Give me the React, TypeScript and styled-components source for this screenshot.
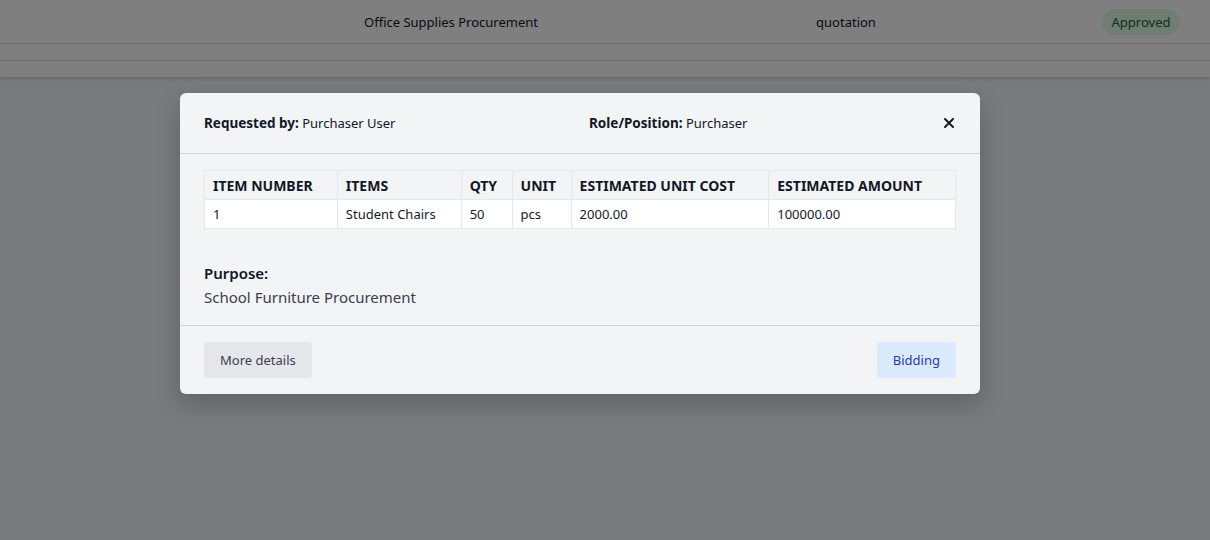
import React from 'react';
import styled, { createGlobalStyle } from 'styled-components';

const GlobalStyle = createGlobalStyle`
  html, body {
    margin: 0;
    padding: 0;
    background: #f3f4f6;
    font-family: 'Noto Sans', 'Open Sans', sans-serif;
    color: #111827;
  }
  * { box-sizing: border-box; }
`;

const Page = styled.div`
  width: 1210px;
  height: 540px;
  position: relative;
  overflow: hidden;
  background: #f3f4f6;
`;

const Card = styled.div`
  background: #ffffff;
  box-shadow: 0 1px 3px rgba(0, 0, 0, 0.12), 0 2px 6px rgba(0, 0, 0, 0.08);
  padding-bottom: 16px;
`;

const BgRow = styled.div<{ $empty?: boolean }>`
  display: grid;
  grid-template-columns: 250px 402px 388px 202px;
  align-items: center;
  height: ${(p) => (p.$empty ? '17px' : '44px')};
  border-bottom: 1px solid #d1d5db;
  font-size: 13px;
`;

const BgCell = styled.div`
  text-align: center;
  color: #111827;
`;

const Badge = styled.span`
  display: inline-block;
  padding: 4px 10px;
  border-radius: 999px;
  background: #dcfce7;
  color: #166534;
  font-size: 13px;
`;

const Overlay = styled.div`
  position: absolute;
  inset: 0;
  background: rgba(0, 0, 0, 0.5);
  padding: 93px 0 0 180px;
`;

const Modal = styled.div`
  width: 800px;
  background: #f3f4f6;
  border-radius: 6px;
  box-shadow: 0 10px 25px rgba(0, 0, 0, 0.2);
  overflow: hidden;
`;

const Header = styled.div`
  height: 61px;
  display: grid;
  grid-template-columns: 385px 1fr auto;
  align-items: center;
  padding: 0 24px 1px;
  border-bottom: 1px solid #d1d5db;
  font-size: 13px;
  color: #111827;
`;

const Label = styled.b`
  font-weight: 700;
  font-size: 13.5px;
`;

const Close = styled.button`
  border: none;
  background: none;
  padding: 0;
  margin-right: 1px;
  display: flex;
  cursor: pointer;
`;

const Body = styled.div`
  padding: 16px 24px 16px;
  border-bottom: 1px solid #d1d5db;
`;

const Table = styled.table`
  width: 100%;
  border-collapse: collapse;
`;

const Th = styled.th<{ $w: number }>`
  width: ${(p) => p.$w}px;
  text-align: left;
  font-size: 14px;
  font-weight: 700;
  padding: 0 8px;
  height: 29px;
  border: 1px solid #e5e7eb;
  background: #f3f4f6;
  color: #111827;
`;

const Td = styled.td`
  padding: 0 8px;
  height: 29px;
  font-size: 13px;
  border: 1px solid #e5e7eb;
  background: #ffffff;
  color: #111827;
`;

const Purpose = styled.div`
  margin-top: 32px;
  font-size: 15px;
  line-height: 24px;
`;

const PurposeLabel = styled.div`
  font-weight: 600;
  color: #111827;
`;

const PurposeText = styled.div`
  color: #374151;
`;

const Footer = styled.div`
  display: flex;
  justify-content: space-between;
  padding: 16px 24px;
`;

const Button = styled.button<{ $variant: 'gray' | 'blue' }>`
  height: 36px;
  padding: 0 16px;
  border: none;
  border-radius: 4px;
  font-family: inherit;
  font-size: 13px;
  cursor: pointer;
  background: ${(p) => (p.$variant === 'blue' ? '#dbeafe' : '#e5e7eb')};
  color: ${(p) => (p.$variant === 'blue' ? '#1e40af' : '#374151')};
`;

const columns = [
  { label: 'ITEM NUMBER', w: 133 },
  { label: 'ITEMS', w: 124 },
  { label: 'QTY', w: 51 },
  { label: 'UNIT', w: 59 },
  { label: 'ESTIMATED UNIT COST', w: 198 },
  { label: 'ESTIMATED AMOUNT', w: 187 },
];

const rows = [['1', 'Student Chairs', '50', 'pcs', '2000.00', '100000.00']];

const App: React.FC = () => {
  return (
    <Page>
      <GlobalStyle />
      <Card>
        <BgRow>
          <BgCell />
          <BgCell>Office Supplies Procurement</BgCell>
          <BgCell>quotation</BgCell>
          <BgCell>
            <Badge>Approved</Badge>
          </BgCell>
        </BgRow>
        <BgRow $empty />
      </Card>
      <Overlay>
        <Modal>
          <Header>
            <div>
              <Label>Requested by:</Label> Purchaser User
            </div>
            <div>
              <Label>Role/Position:</Label> Purchaser
            </div>
            <Close aria-label="Close">
              <svg width="12" height="12" viewBox="0 0 12 12">
                <path d="M2 2 L10 10 M10 2 L2 10" stroke="#111827" strokeWidth="2" strokeLinecap="round" />
              </svg>
            </Close>
          </Header>
          <Body>
            <Table>
              <thead>
                <tr>
                  {columns.map((c) => (
                    <Th key={c.label} $w={c.w}>
                      {c.label}
                    </Th>
                  ))}
                </tr>
              </thead>
              <tbody>
                {rows.map((r, i) => (
                  <tr key={i}>
                    {r.map((v, j) => (
                      <Td key={j}>{v}</Td>
                    ))}
                  </tr>
                ))}
              </tbody>
            </Table>
            <Purpose>
              <PurposeLabel>Purpose:</PurposeLabel>
              <PurposeText>School Furniture Procurement</PurposeText>
            </Purpose>
          </Body>
          <Footer>
            <Button $variant="gray">More details</Button>
            <Button $variant="blue">Bidding</Button>
          </Footer>
        </Modal>
      </Overlay>
    </Page>
  );
};

export default App;
